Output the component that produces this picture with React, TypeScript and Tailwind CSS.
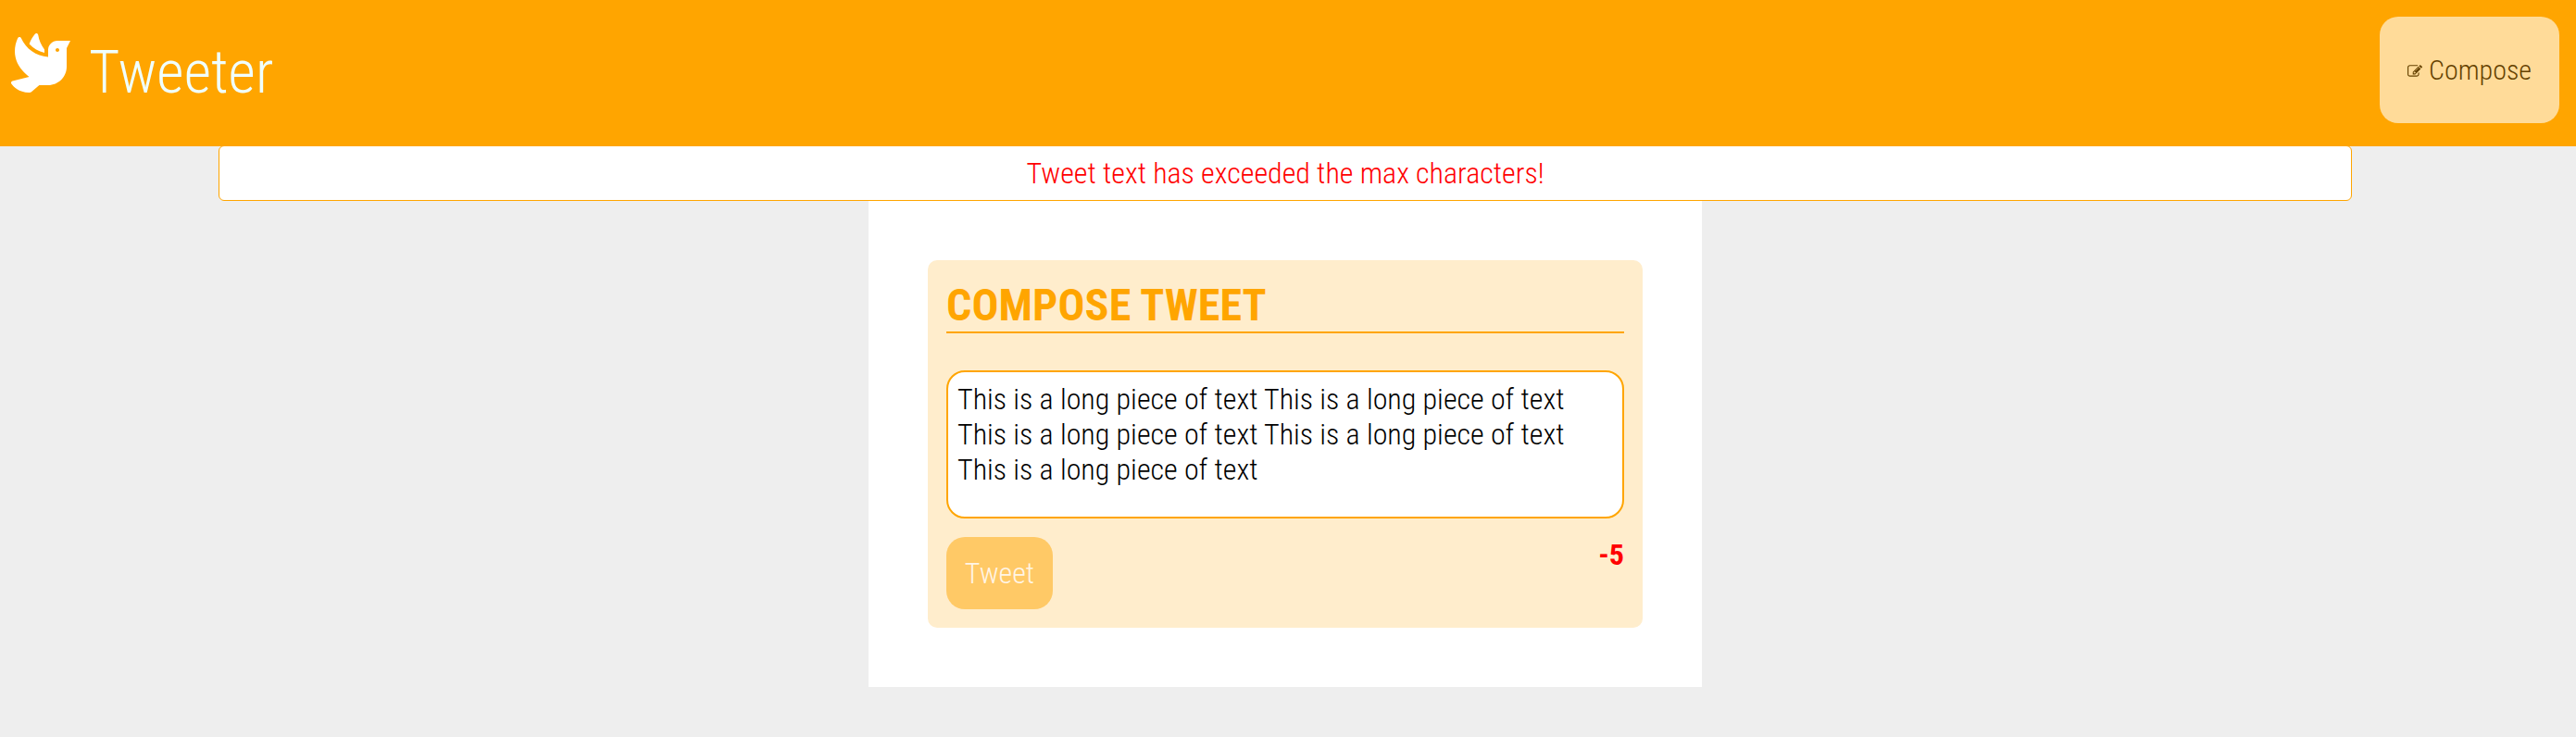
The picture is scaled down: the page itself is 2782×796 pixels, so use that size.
import { FaDove } from "react-icons/fa";

function EditIcon() {
  return (
    <svg viewBox="0 0 1792 1792" fill="currentColor" className="mt-[3px] size-[16px] shrink-0">
      <path d="M888 1184l116-116-152-152-116 116v56h96v96h56zm440-720q-16-16-33 1l-350 350q-17 17-1 33t33-1l350-350q17-17 1-33zm80 594v190q0 119-84.5 203.5t-203.5 84.5h-832q-119 0-203.5-84.5t-84.5-203.5v-832q0-119 84.5-203.5t203.5-84.5h832q63 0 117 25 15 7 18 23 3 17-9 29l-49 49q-14 14-32 8-23-6-45-6h-832q-66 0-113 47t-47 113v832q0 66 47 113t113 47h832q66 0 113-47t47-113v-126q0-13 9-22l64-64q15-15 35-7t20 29zm-96-738l288 288-672 672h-288v-288zm444 132l-92 92-288-288 92-92q28-28 68-28t68 28l152 152q28 28 28 68t-28 68z" />
    </svg>
  );
}

function Header() {
  return (
    <header className="relative z-10 flex h-[158px] items-start justify-between bg-[#ffa500] pl-[12px] pr-[18px] pt-[18px]">
      <div className="flex items-start">
        <FaDove className="mt-[18px] size-[64px] text-white" />
        <h1 className="ml-[20px] mt-[23px] text-[64px] leading-[76px] text-[#f0ffff]">Tweeter</h1>
      </div>
      <button className="flex h-[115px] w-[194px] items-center rounded-[20px] bg-[#ffdb99] pl-[30px] text-[#664200]">
        <EditIcon />
        <span className="ml-[7px] mt-px text-[30px] leading-[36px]">Compose</span>
      </button>
    </header>
  );
}

export default function App() {
  return (
    <div className="min-h-screen bg-[#eeeeee] text-[32px] font-light leading-[38px] [font-family:'Roboto_Condensed',Roboto,sans-serif] [font-stretch:75%]">
      <Header />
      <div className="-mt-px ml-[236px] flex h-[60px] w-[2304px] items-center justify-center rounded-[6px] border border-[#ffa500] bg-white text-[#ff0000]">
        Tweet text has exceeded the max characters!
      </div>
      <main className="ml-[938px] h-[525px] w-[900px] bg-white px-[64px] pt-[64px]">
        <section className="h-[397px] rounded-[10px] bg-[#ffedcc] p-[20px]">
          <h2 className="h-[59px] border-b-2 border-[#ffa500] text-[48px] font-bold leading-[57px] tracking-[0.13px] text-[#ffa500]">
            COMPOSE TWEET
          </h2>
          <form className="mt-[40px]">
            <textarea
              readOnly
              className="block h-[160px] w-full resize-none overflow-hidden rounded-[20px] border-2 border-[#ffa500] bg-white px-[10px] py-[10px] leading-[38px] text-black outline-none"
              value="This is a long piece of text This is a long piece of text This is a long piece of text This is a long piece of text This is a long piece of text"
            />
            <div className="mt-[20px] flex items-start justify-between">
              <button type="button" className="h-[78px] w-[115px] rounded-[20px] bg-[#ffc966] text-[#fff5e6]">
                Tweet
              </button>
              <output className="font-bold text-[#ff0000]">-5</output>
            </div>
          </form>
        </section>
      </main>
    </div>
  );
}
